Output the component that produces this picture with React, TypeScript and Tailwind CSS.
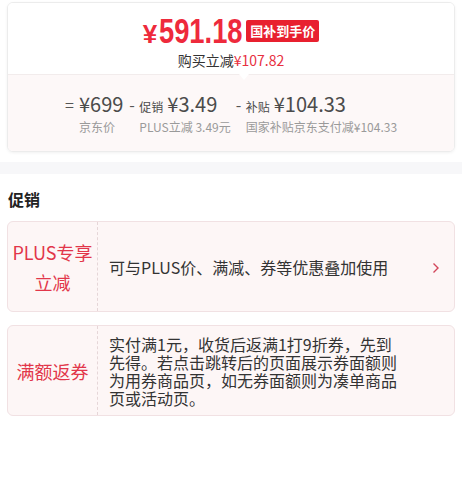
import React from "react";

const font = { fontFamily: '"Noto Sans CJK SC", "Noto Sans", sans-serif' };
const latin = { fontFamily: '"Liberation Sans", Arial, sans-serif' };

function PriceCol({ sign, signW, top, label }: { sign: string; signW: string; top: React.ReactNode; label: string }) {
  return (
    <div className="flex items-start">
      <span className={`${signW} text-[16px] leading-[26px] text-[#555]`}>{sign}</span>
      <div className="flex flex-col">
        <div className="flex items-baseline h-[26px] leading-[26px] text-[#4b4b4b]">{top}</div>
        <span className="text-[12px] leading-[16px] mt-[2px] text-[#9a9a9a] whitespace-nowrap">{label}</span>
      </div>
    </div>
  );
}

export default function App() {
  return (
    <div className="w-[462px] h-[477px] bg-white overflow-hidden" style={font}>
      <div className="px-[7px] pt-[2px]">
        <div className="border border-[#ececec] rounded-[6px] shadow-[0_1px_3px_rgba(0,0,0,0.06)] overflow-hidden">
          <div className="relative h-[71px] flex flex-col items-center bg-white">
            <div className="flex items-center mt-[12px] h-[32px]">
              <span className="text-[#ee2a3c] text-[26px] font-bold leading-none mt-[5px] mr-[2px]" style={latin}>¥</span>
              <span className="inline-block w-[86px] h-[34px] overflow-visible">
                <span className="inline-block origin-left scale-x-[0.78] whitespace-nowrap text-[#ee2a3c] text-[35px] font-bold leading-[34px]" style={latin}>591.18</span>
              </span>
              <span className="ml-[1px] bg-[#e8202f] text-white text-[13px] font-bold leading-[22px] px-[4px] rounded-[2px]">国补到手价</span>
            </div>
            <div className="text-[14px] leading-[18px] mt-[4px] text-[#333]">
              购买立减<span className="text-[#e8303f]">¥107.82</span>
            </div>
            <div className="absolute bottom-[-6px] left-[231px] w-0 h-0 border-l-[5px] border-r-[5px] border-t-[6px] border-l-transparent border-r-transparent border-t-white z-10" />
          </div>
          <div className="h-[77px] bg-[#fdf8f8] border-t border-[#f2ecec] flex justify-center pt-[16px]">
            <PriceCol signW="w-[14px]" sign="=" top={<span className="text-[20px]">¥699</span>} label="京东价" />
            <div className="w-[6px]" />
            <PriceCol
              signW="w-[10px]"
              sign="-"
              top={
                <>
                  <span className="text-[12px] mr-[4px]">促销</span>
                  <span className="text-[20px]">¥3.49</span>
                </>
              }
              label="PLUS立减 3.49元"
            />
            <div className="w-[5px]" />
            <PriceCol
              signW="w-[10px]"
              sign="-"
              top={
                <>
                  <span className="text-[12px] mr-[4px]">补贴</span>
                  <span className="text-[20px]">¥104.33</span>
                </>
              }
              label="国家补贴京东支付减¥104.33"
            />
          </div>
        </div>
      </div>

      <div className="h-[12px] bg-[#f7f7f9] mt-[10px]" />

      <div className="px-[7px]">
        <h2 className="text-[16px] font-bold text-[#222] leading-[22px] mt-[14px] mb-[11px] pl-[1px]">促销</h2>

        <div className="flex h-[91px] border border-[#f1e1e3] bg-[#fdf6f6] rounded-[6px]">
          <div className="w-[90px] shrink-0 border-r border-dashed border-[#e6d6d8] flex items-center justify-center">
            <span className="text-[18px] leading-[30px] text-[#e2364a] text-center">PLUS专享<br />立减</span>
          </div>
          <div className="flex-1 flex items-center pl-[11px] pr-[14px]">
            <span className="flex-1 text-[16px] text-[#333] leading-[20px]">可与PLUS价、满减、券等优惠叠加使用</span>
            <svg width="8" height="12" viewBox="0 0 8 12" className="mt-[2px]">
              <path d="M1.5 1.5 L6 6 L1.5 10.5" fill="none" stroke="#d2465a" strokeWidth="1.4" />
            </svg>
          </div>
        </div>

        <div className="flex h-[91px] mt-[13px] border border-[#f1e1e3] bg-[#fdf6f6] rounded-[6px]">
          <div className="w-[90px] shrink-0 border-r border-dashed border-[#e6d6d8] flex items-center justify-center">
            <span className="text-[18px] leading-[30px] text-[#e2364a]">满额返券</span>
          </div>
          <div className="flex-1 flex items-center pl-[11px]">
            <p className="w-[292px] text-[16px] text-[#333] leading-[18px]">
              实付满1元，收货后返满1打9折券，先到先得。若点击跳转后的页面展示券面额则为用券商品页，如无券面额则为凑单商品页或活动页。
            </p>
          </div>
        </div>
      </div>
    </div>
  );
}
